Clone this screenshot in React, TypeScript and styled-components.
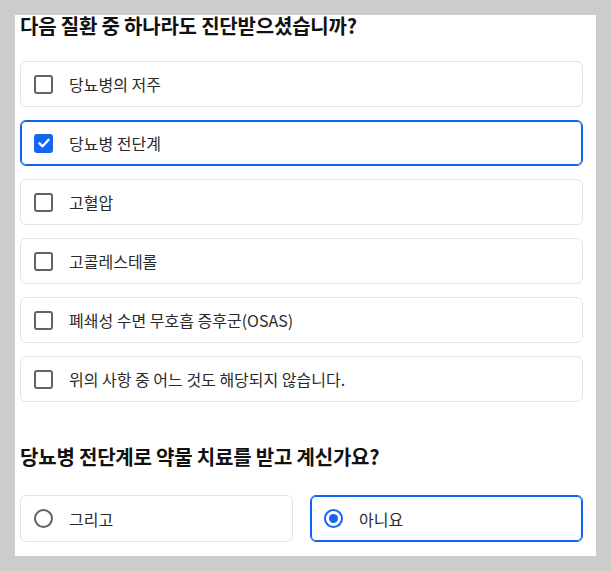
import React, { useState } from "react";
import styled, { createGlobalStyle } from "styled-components";

const GlobalStyle = createGlobalStyle`
    html, body {
        margin: 0;
        padding: 0;
        background: #cccccc;
    }
    body {
        font-family: "Noto Sans CJK KR", "Noto Sans", sans-serif;
    }
`;

const conditions = [
    "당뇨병의 저주",
    "당뇨병 전단계",
    "고혈압",
    "고콜레스테롤",
    "폐쇄성 수면 무호흡 증후군(OSAS)",
    "위의 사항 중 어느 것도 해당되지 않습니다.",
];

export default function App() {
    const [checked, setChecked] = useState<string[]>(["당뇨병 전단계"]);
    const [answer, setAnswer] = useState("아니요");

    const toggle = (name: string) =>
        setChecked((prev) =>
            prev.includes(name) ? prev.filter((n) => n !== name) : [...prev, name]
        );

    return (
        <>
            <GlobalStyle />
            <Panel>
                <Question>다음 질환 중 하나라도 진단받으셨습니까?</Question>
                <OptionList>
                    {conditions.map((c) => {
                        const on = checked.includes(c);
                        return (
                            <Option key={c} $selected={on} onClick={() => toggle(c)}>
                                <CheckBox $checked={on}>
                                    {on && (
                                        <svg width="14" height="14" viewBox="0 0 14 14">
                                            <path
                                                d="M2.5 7.3 L5.6 10.3 L11.6 3.8"
                                                fill="none"
                                                stroke="#fff"
                                                strokeWidth="2.3"
                                                strokeLinecap="round"
                                                strokeLinejoin="round"
                                            />
                                        </svg>
                                    )}
                                </CheckBox>
                                <Label>{c}</Label>
                            </Option>
                        );
                    })}
                </OptionList>

                <SecondQuestion>당뇨병 전단계로 약물 치료를 받고 계신가요?</SecondQuestion>
                <RadioRow>
                    {["그리고", "아니요"].map((a) => {
                        const on = answer === a;
                        return (
                            <RadioOption key={a} $selected={on} onClick={() => setAnswer(a)}>
                                <Radio $checked={on} />
                                <Label>{a}</Label>
                            </RadioOption>
                        );
                    })}
                </RadioRow>
            </Panel>
        </>
    );
}

const Panel = styled.div`
    box-sizing: border-box;
    margin: 15px 0 0 15px;
    width: 581px;
    height: 541px;
    background: #ffffff;
    padding: 0 13px 13px 5px;
    display: flow-root;
`;

const Question = styled.h2`
    margin: 0 0 24px 0;
    font-size: 20px;
    line-height: 22px;
    font-weight: 700;
    color: #111111;
    letter-spacing: -0.2px;
`;

const SecondQuestion = styled(Question)`
    margin: 44px 0 27px 0;
`;

const OptionList = styled.div`
    display: flex;
    flex-direction: column;
    gap: 13px;
`;

const Option = styled.div<{ $selected: boolean }>`
    box-sizing: border-box;
    height: 46px;
    display: flex;
    align-items: center;
    gap: 16px;
    padding: 0 13px;
    border: 1px solid ${(p) => (p.$selected ? "#0f62f2" : "#e4e4e4")};
    box-shadow: ${(p) => (p.$selected ? "inset 0 0 0 1px #0f62f2" : "none")};
    border-radius: 6px;
    background: #ffffff;
    cursor: pointer;
`;

const RadioOption = styled(Option)`
    height: 47px;
`;

const RadioRow = styled.div`
    display: grid;
    grid-template-columns: 1fr 1fr;
    gap: 17px;
`;

const CheckBox = styled.span<{ $checked: boolean }>`
    box-sizing: border-box;
    flex: none;
    width: 19px;
    height: 19px;
    border-radius: 3px;
    border: 2px solid ${(p) => (p.$checked ? "#1466f2" : "#5f6466")};
    background: ${(p) => (p.$checked ? "#1466f2" : "#ffffff")};
    display: flex;
    align-items: center;
    justify-content: center;
`;

const Radio = styled.span<{ $checked: boolean }>`
    box-sizing: border-box;
    flex: none;
    width: 19px;
    height: 19px;
    border-radius: 50%;
    border: 2px solid ${(p) => (p.$checked ? "#1466f2" : "#5f6466")};
    display: flex;
    align-items: center;
    justify-content: center;

    &::after {
        content: "";
        display: ${(p) => (p.$checked ? "block" : "none")};
        width: 9px;
        height: 9px;
        border-radius: 50%;
        background: #1466f2;
    }
`;

const Label = styled.span`
    font-size: 16px;
    color: #2a2a2a;
    white-space: nowrap;
`;
